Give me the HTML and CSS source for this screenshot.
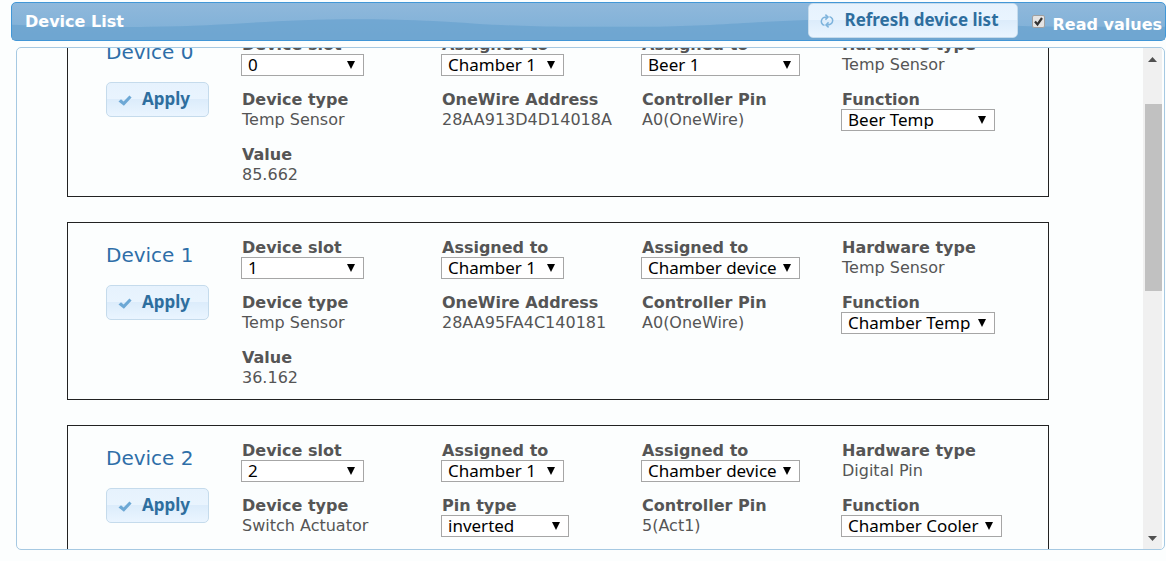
FILE: index.html
```html
<!DOCTYPE html>
<html lang="en">
<head>
<meta charset="utf-8">
<title>Device List</title>
<link rel="stylesheet" href="styles.css">
</head>
<body>
<svg class="defs" aria-hidden="true">
  <symbol id="check" viewBox="0 0 16 16"><path d="M1.500 9.400 4 7.200 6.600 9.600 12.400 3.400 14.600 5.400 6.900 13.800Z" fill="#6da8d5"/></symbol>
  <symbol id="refresh" viewBox="0 0 16 16" fill="none" stroke="#7db3dc" stroke-width="1.5"><path d="M5.500 12.400C2.600 11.500 1.800 9 2.600 6.900 3.300 5 5 4 8 4M10.500 3.600C13.400 4.500 14.200 7 13.400 9.100 12.700 11 11 12 8 12"/><path d="M6.400 1.600 9 4 6.400 6.600M9.600 9.400 7 12 9.600 14.400"/></symbol>
</svg>
<header class="titlebar">
  <svg class="wave" viewBox="0 0 1155 39" preserveAspectRatio="none" aria-hidden="true"><path d="M0 23C50 25 90 26 139 25C220 24 260 17 350 17C440 17 470 25 560 25L639 25C720 24 760 17 850 17C940 17 970 25 1060 25L1155 25V39H0Z"/></svg>
  <h1>Device List</h1>
  <button class="button refresh" type="button"><svg class="icon"><use href="#refresh"/></svg>Refresh device list</button>
  <label class="read"><input type="checkbox" checked><span>Read values</span></label>
</header>
<main class="panel">
  <div class="viewport">
    <div class="devices">
      <section class="card">
        <div class="side"><h2>Device 0</h2><button class="button" type="button"><svg class="icon"><use href="#check"/></svg>Apply</button></div>
        <div class="fields">
          <div class="field"><label for="s0">Device slot</label><select id="s0" class="w-slot"><option>0</option></select></div>
          <div class="field"><label for="c0">Assigned to</label><select id="c0" class="w-slot"><option>Chamber 1</option></select></div>
          <div class="field"><label for="b0">Assigned to</label><select id="b0" class="w-beer"><option>Beer 1</option></select></div>
          <div class="field"><b>Hardware type</b><span>Temp Sensor</span></div>
          <div class="field"><b>Device type</b><span>Temp Sensor</span></div>
          <div class="field"><b>OneWire Address</b><span>28AA913D4D14018A</span></div>
          <div class="field"><b>Controller Pin</b><span>A0(OneWire)</span></div>
          <div class="field"><label for="f0">Function</label><select id="f0" class="w-temp"><option>Beer Temp</option></select></div>
          <div class="field"><b>Value</b><span>85.662</span></div>
        </div>
      </section>
      <section class="card">
        <div class="side"><h2>Device 1</h2><button class="button" type="button"><svg class="icon"><use href="#check"/></svg>Apply</button></div>
        <div class="fields">
          <div class="field"><label for="s1">Device slot</label><select id="s1" class="w-slot"><option>1</option></select></div>
          <div class="field"><label for="c1">Assigned to</label><select id="c1" class="w-slot"><option>Chamber 1</option></select></div>
          <div class="field"><label for="b1">Assigned to</label><select id="b1" class="w-beer"><option>Chamber device</option></select></div>
          <div class="field"><b>Hardware type</b><span>Temp Sensor</span></div>
          <div class="field"><b>Device type</b><span>Temp Sensor</span></div>
          <div class="field"><b>OneWire Address</b><span>28AA95FA4C140181</span></div>
          <div class="field"><b>Controller Pin</b><span>A0(OneWire)</span></div>
          <div class="field"><label for="f1">Function</label><select id="f1" class="w-temp"><option>Chamber Temp</option></select></div>
          <div class="field"><b>Value</b><span>36.162</span></div>
        </div>
      </section>
      <section class="card">
        <div class="side"><h2>Device 2</h2><button class="button" type="button"><svg class="icon"><use href="#check"/></svg>Apply</button></div>
        <div class="fields">
          <div class="field"><label for="s2">Device slot</label><select id="s2" class="w-slot"><option>2</option></select></div>
          <div class="field"><label for="c2">Assigned to</label><select id="c2" class="w-slot"><option>Chamber 1</option></select></div>
          <div class="field"><label for="b2">Assigned to</label><select id="b2" class="w-beer"><option>Chamber device</option></select></div>
          <div class="field"><b>Hardware type</b><span>Digital Pin</span></div>
          <div class="field"><b>Device type</b><span>Switch Actuator</span></div>
          <div class="field"><label for="p2">Pin type</label><select id="p2" class="w-pin"><option>inverted</option></select></div>
          <div class="field"><b>Controller Pin</b><span>5(Act1)</span></div>
          <div class="field"><label for="f2">Function</label><select id="f2" class="w-cool"><option>Chamber Cooler</option></select></div>
        </div>
      </section>
    </div>
  </div>
  <div class="scrollbar" aria-hidden="true">
    <svg class="arrow" viewBox="0 0 19 20"><path d="M5 14 9.500 9 14 14Z"/></svg>
    <div class="track"><div class="thumb"></div></div>
    <svg class="arrow" viewBox="0 0 19 20"><path d="M5 7 9.500 12 14 7Z"/></svg>
  </div>
</main>
</body>
</html>
```
FILE: styles.css
```css
* { box-sizing: border-box; }
html, body { height: 100%; }
body {
  margin: 0;
  padding: 2px 0 11px 11px;
  display: flex;
  flex-direction: column;
  gap: 6px;
  overflow: hidden;
  background: #fcfefe;
  color: #555;
  font: 16px/20px "DejaVu Sans", Verdana, sans-serif;
}
h1, h2 { margin: 0; }
.defs { display: none; }
.titlebar {
  position: relative;
  flex: none;
  display: flex;
  align-items: center;
  height: 39px;
  padding: 0 3px 0 13px;
  border: 1px solid #4297d7;
  border-radius: 5px;
  background: linear-gradient(#8fb8db, #7cafd7);
  color: #fff;
  font-weight: bold;
}
.titlebar > * { position: relative; }
.titlebar .wave { position: absolute; inset: 0; width: 100%; height: 100%; }
.wave path { fill: #6ba4d0; fill-opacity: .8; }
.titlebar h1 { flex: 1; font-size: 16px; line-height: 20px; }
.button {
  display: flex;
  align-items: center;
  height: 35px;
  padding: 0 18px 2px 10px;
  border: 1px solid #c5dbec;
  border-radius: 5px;
  background: linear-gradient(#e6f2fd, #e9f4fe 50%, #dcecfb 50%, #eaf5ff);
  color: #2e6e9e;
  font: bold 17px/20px "Noto Sans", "Open Sans", sans-serif;
  white-space: nowrap;
}
.titlebar .refresh { align-self: flex-start; }
.icon { width: 16px; height: 16px; margin: 3px 9px 0 0; }
.read { display: flex; align-items: center; gap: 8px; margin-left: 14px; white-space: nowrap; }
.read input {
  width: 13px;
  height: 13px;
  margin: 0;
  appearance: none;
  border: 1px solid #a0a0a0;
  border-radius: 2px;
  background: #e4e4e4 url("data:image/svg+xml,%3Csvg xmlns='http://www.w3.org/2000/svg' width='11' height='11'%3E%3Cpath d='M2 5.500 4.500 8.500 9 2' fill='none' stroke='%23333' stroke-width='2.200'/%3E%3C/svg%3E") center no-repeat;
}
.read span { padding-top: 6px; }
.panel {
  flex: 1;
  min-height: 0;
  display: flex;
  margin: 0 1px 0 5px;
  border: 1px solid #a6c9e2;
  border-radius: 5px;
  overflow: hidden;
}
.viewport { flex: 1; overflow: hidden; }
.devices { display: flex; flex-direction: column; gap: 25px; margin: -29px 94px 0 50px; }
.card { display: flex; padding: 15px 0 11px 38px; border: 1px solid #222; }
.side { flex: none; width: 135px; padding-top: 7px; }
.side h2 { margin-bottom: 20px; color: #2e6ea8; font-weight: normal; font-size: 20px; line-height: 20px; }
.fields { flex: 1; display: grid; grid-template-columns: repeat(auto-fill, 200px); grid-template-rows: repeat(3, 40px); row-gap: 15px; }
.field { display: flex; flex-direction: column; align-items: flex-start; white-space: nowrap; }
.field label, .field b, .field span { padding-left: 1px; }
.field label, .field b { font-weight: bold; }
select {
  flex: none;
  height: 22px;
  margin: -1px 0 0;
  padding: 0 20px 1px 6px;
  border: 1px solid #a6a6a6;
  border-radius: 0;
  appearance: none;
  background: #fff url("data:image/svg+xml,%3Csvg xmlns='http://www.w3.org/2000/svg' width='8' height='8'%3E%3Cpath d='M0 0h8L4 8z'/%3E%3C/svg%3E") no-repeat right 8px center;
  color: #000;
  font: 17px/19px "Noto Sans", "Open Sans", sans-serif;
}
.w-slot { width: 123px; }
.w-pin { width: 128px; }
.w-temp { width: 154px; }
.w-beer { width: 159px; }
.w-cool { width: 161px; }
.scrollbar { flex: none; display: flex; flex-direction: column; width: 21px; padding-right: 2px; background: linear-gradient(#f0f0f0, #f0f0f0) no-repeat 0 0 / 19px 100%; }
.arrow { flex: none; width: 19px; height: 20px; fill: #505050; }
.track { flex: 1; padding: 36px 0 0 2px; }
.thumb { width: 17px; height: 187px; background: #c1c1c1; }
```
